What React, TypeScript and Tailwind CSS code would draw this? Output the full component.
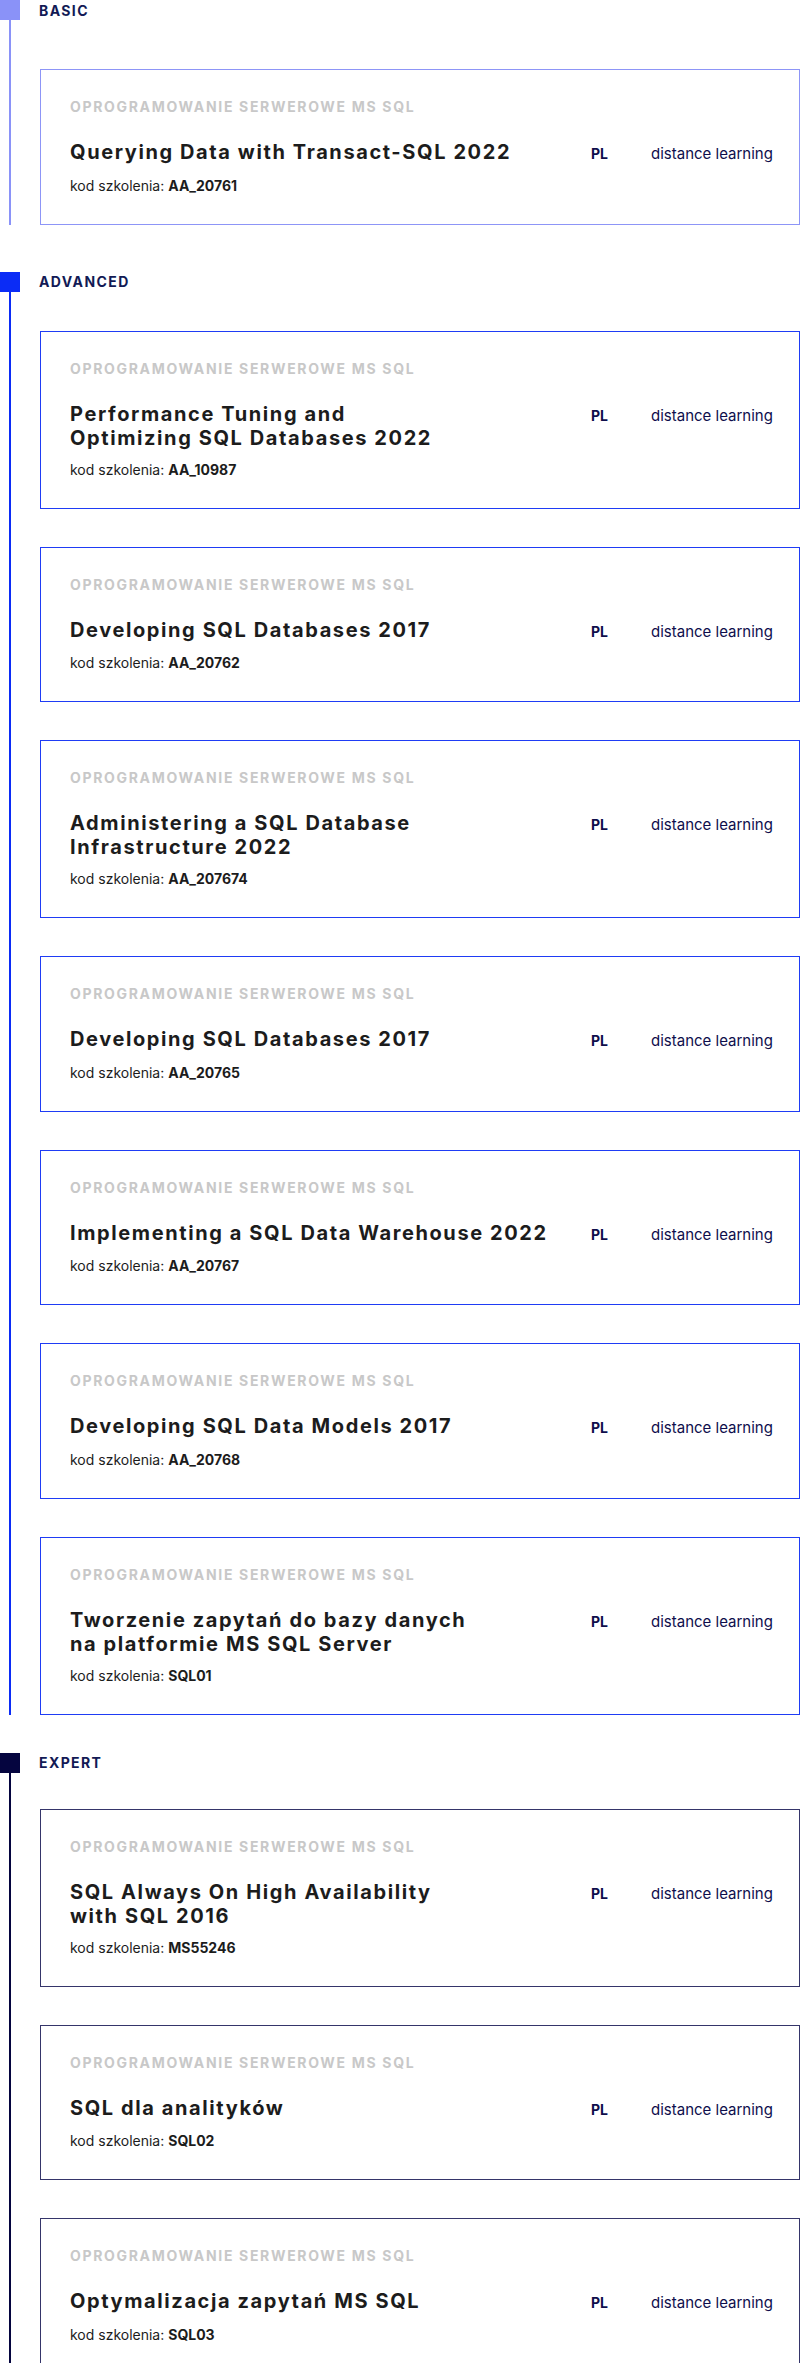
type Course = {
  title: string[];
  code: string;
};

type Level = {
  label: string;
  color: string;
  border: string;
  cardsTop: string;
  bottom: string;
  courses: Course[];
};

const levels: Level[] = [
  {
    label: "BASIC",
    color: "bg-[#8a92f8]",
    border: "border-[#8d95f7]",
    cardsTop: "mt-[49px]",
    bottom: "pb-[47px]",
    courses: [{ title: ["Querying Data with Transact-SQL 2022"], code: "AA_20761" }],
  },
  {
    label: "ADVANCED",
    color: "bg-[#0b2cf6]",
    border: "border-[#1f3cf5]",
    cardsTop: "mt-[39px]",
    bottom: "pb-[38px]",
    courses: [
      { title: ["Performance Tuning and", "Optimizing SQL Databases 2022"], code: "AA_10987" },
      { title: ["Developing SQL Databases 2017"], code: "AA_20762" },
      { title: ["Administering a SQL Database", "Infrastructure 2022"], code: "AA_207674" },
      { title: ["Developing SQL Databases 2017"], code: "AA_20765" },
      { title: ["Implementing a SQL Data Warehouse 2022"], code: "AA_20767" },
      { title: ["Developing SQL Data Models 2017"], code: "AA_20768" },
      { title: ["Tworzenie zapytań do bazy danych", "na platformie MS SQL Server"], code: "SQL01" },
    ],
  },
  {
    label: "EXPERT",
    color: "bg-[#05053f]",
    border: "border-[#35356a]",
    cardsTop: "mt-[36px]",
    bottom: "pb-0",
    courses: [
      { title: ["SQL Always On High Availability", "with SQL 2016"], code: "MS55246" },
      { title: ["SQL dla analityków"], code: "SQL02" },
      { title: ["Optymalizacja zapytań MS SQL"], code: "SQL03" },
    ],
  },
];

function CourseCard({ course, border }: { course: Course; border: string }) {
  return (
    <div className={`border ${border} bg-white pt-[27px] pb-[28px] pl-[29px] pr-[23px]`}>
      <div className="text-[14px] leading-[20px] font-bold tracking-[0.12em] text-[#c8c8c8]">
        OPROGRAMOWANIE SERWEROWE MS SQL
      </div>
      <div className="mt-[23px] flex items-baseline">
        <div className="w-[521px] shrink-0 text-[20px] leading-[24px] font-bold tracking-[0.08em] text-[#1c1c1c]">
          {course.title.map((line) => (
            <div key={line} className="whitespace-nowrap">
              {line}
            </div>
          ))}
        </div>
        <div className="w-[60px] shrink-0 text-[14px] font-bold text-[#0e0e4c]">PL</div>
        <div className="text-[15px] text-[#0e0e4c]">distance learning</div>
      </div>
      <div className="mt-[10px] text-[14px] leading-[20px] text-[#1c1c1c]">
        kod szkolenia: <span className="font-bold">{course.code}</span>
      </div>
    </div>
  );
}

export default function App() {
  return (
    <div className="w-[800px] bg-white font-['Inter','Liberation_Sans',sans-serif]">
      {levels.map((level) => (
        <section key={level.label} className={`flex ${level.bottom}`}>
          <div className="flex w-[20px] shrink-0 flex-col items-center">
            <div className={`h-[20px] w-[20px] ${level.color}`} />
            <div className={`w-[2px] flex-1 ${level.color}`} />
          </div>
          <div className="ml-[20px] flex-1">
            <div className="flex h-[20px] items-center text-[14px] font-bold tracking-[0.1em] text-[#121a55] -ml-px">
              {level.label}
            </div>
            <div className={`flex flex-col gap-[38px] ${level.cardsTop}`}>
              {level.courses.map((course) => (
                <CourseCard key={course.code} course={course} border={level.border} />
              ))}
            </div>
          </div>
        </section>
      ))}
    </div>
  );
}
